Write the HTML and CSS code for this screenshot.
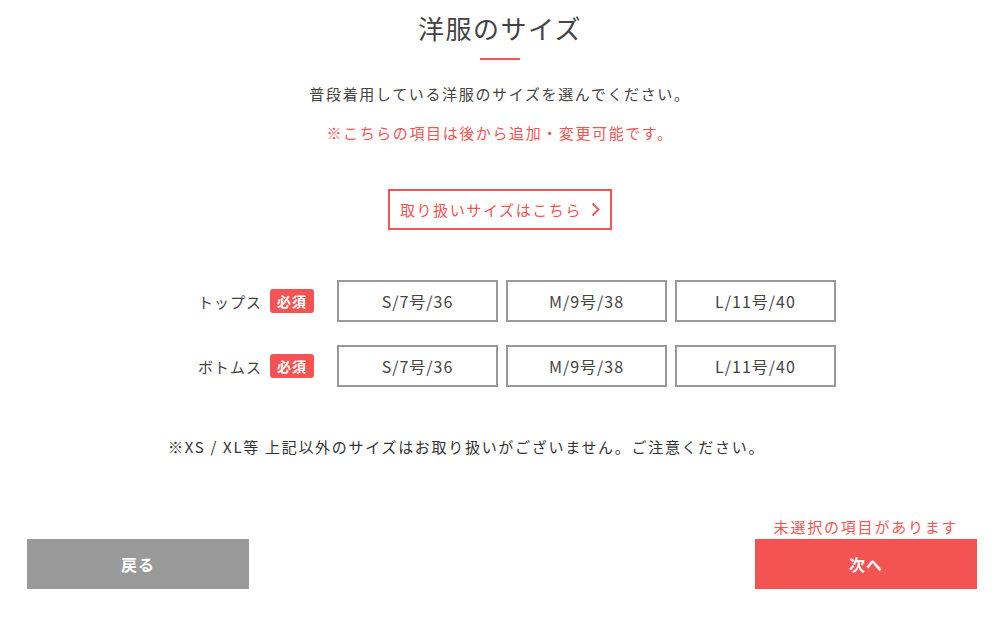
FILE: index.html
```html
<!DOCTYPE html>
<html lang="ja">

<head>
    <meta charset="UTF-8">
    <meta name="viewport" content="width=device-width, initial-scale=1.0">
    <title>洋服のサイズ</title>
    <link rel="stylesheet" href="styles.css">
</head>

<body>
    <div class="page">
        <h1 class="title">洋服のサイズ</h1>
        <p class="lead">普段着用している洋服のサイズを選んでください。</p>
        <p class="notice">※こちらの項目は後から追加・変更可能です。</p>

        <div class="guide">
            <a class="guide-link" href="#">取り扱いサイズはこちら
                <svg class="chev" width="9" height="15" viewBox="0 0 9 15">
                    <polyline points="1.5,1.5 7.5,7.5 1.5,13.5" fill="none" stroke="#f45353" stroke-width="1.8" />
                </svg>
            </a>
        </div>

        <div class="sizes">
            <div class="size-row">
                <span class="size-label">トップス</span>
                <span class="badge">必須</span>
                <div class="choices">
                    <button class="choice">S/7号/36</button>
                    <button class="choice">M/9号/38</button>
                    <button class="choice">L/11号/40</button>
                </div>
            </div>
            <div class="size-row">
                <span class="size-label">ボトムス</span>
                <span class="badge">必須</span>
                <div class="choices">
                    <button class="choice">S/7号/36</button>
                    <button class="choice">M/9号/38</button>
                    <button class="choice">L/11号/40</button>
                </div>
            </div>
        </div>

        <p class="caution">※XS / XL等 上記以外のサイズはお取り扱いがございません。ご注意ください。</p>

        <div class="footer">
            <button class="btn btn-back">戻る</button>
            <div class="next-col">
                <p class="error">未選択の項目があります</p>
                <button class="btn btn-next">次へ</button>
            </div>
        </div>
    </div>
</body>

</html>
```

FILE: styles.css
```css
body, html {
    margin: 0;
    padding: 0;
    background: #fff;
    color: #444;
    font-family: "Noto Sans CJK JP", "Noto Sans", sans-serif;
}

.page {
    width: 1000px;
    height: 619px;
    overflow: hidden;
}

.title {
    margin: 0;
    padding-top: 12px;
    font-size: 26px;
    font-weight: normal;
    line-height: 32px;
    letter-spacing: 1.5px;
    text-align: center;
    color: #444;
}

.title:after {
    content: "";
    display: block;
    width: 40px;
    height: 2px;
    margin: 14px auto 0;
    background: #f45353;
}

.lead,
.notice {
    margin: 0;
    font-size: 15px;
    line-height: 22px;
    text-align: center;
}

.lead {
    margin-top: 23px;
    letter-spacing: 1.65px;
    color: #444;
}

.notice {
    margin-top: 17px;
    letter-spacing: 1.6px;
    color: #f45353;
}

.guide {
    margin-top: 45px;
    text-align: center;
}

.guide-link {
    display: inline-flex;
    align-items: center;
    justify-content: center;
    gap: 9px;
    box-sizing: border-box;
    width: 224px;
    height: 41px;
    border: 2px solid #f45353;
    color: #f45353;
    font-size: 15px;
    letter-spacing: 1.6px;
    text-decoration: none;
}

.chev {
    display: block;
}

.sizes {
    margin: 50px 0 0 122px;
    display: flex;
    flex-direction: column;
    gap: 23px;
}

.size-row {
    display: flex;
    align-items: center;
    height: 42px;
}

.size-label {
    width: 140px;
    text-align: right;
    font-size: 15px;
    letter-spacing: 1px;
    color: #444;
}

.badge {
    margin-left: 8px;
    width: 44px;
    height: 24px;
    line-height: 24px;
    border-radius: 3px;
    background: #f45353;
    color: #fff;
    font-size: 14px;
    font-weight: bold;
    text-align: center;
    letter-spacing: 1px;
}

.choices {
    margin-left: 23px;
    display: flex;
    gap: 8px;
}

.choice {
    box-sizing: border-box;
    width: 161px;
    height: 42px;
    border: 2px solid #999;
    background: #fff;
    color: #444;
    font-family: inherit;
    font-size: 16px;
    letter-spacing: 1px;
    padding: 0;
}

.caution {
    margin: 49px 0 0 168px;
    font-size: 15px;
    line-height: 22px;
    letter-spacing: 1.7px;
    color: #333;
}

.footer {
    margin-top: 58px;
    padding: 0 23px 0 27px;
    display: flex;
    justify-content: space-between;
    align-items: flex-end;
}

.next-col {
    display: flex;
    flex-direction: column;
    align-items: center;
}

.error {
    margin: 0 0 1px;
    font-size: 15px;
    line-height: 22px;
    letter-spacing: 1.8px;
    color: #f45353;
}

.btn {
    width: 222px;
    height: 50px;
    border: none;
    color: #fff;
    font-family: inherit;
    font-size: 16px;
    font-weight: bold;
    letter-spacing: 1px;
    padding: 0;
}

.btn-back {
    background: #9a9a9a;
}

.btn-next {
    background: #f45353;
}
```
